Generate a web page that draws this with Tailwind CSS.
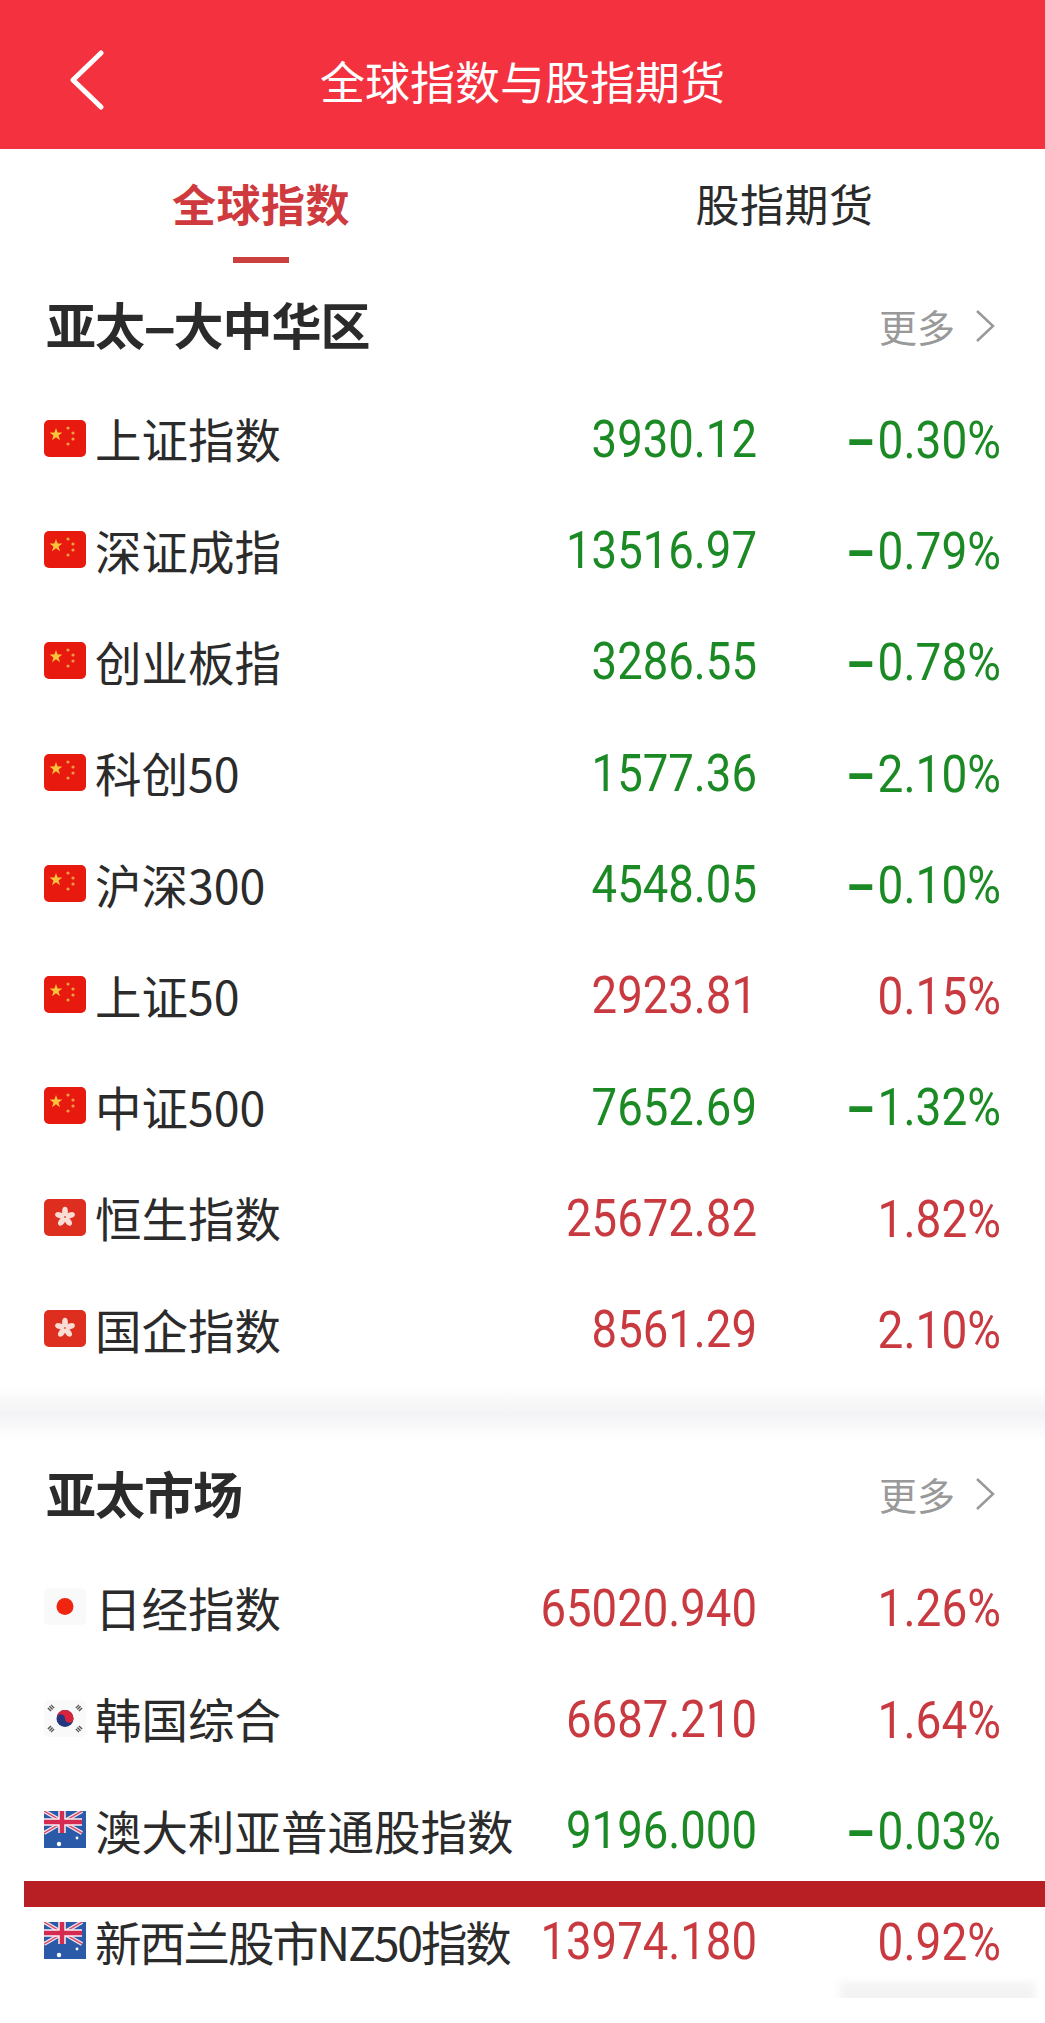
<!DOCTYPE html>
<html lang="zh-CN">
  <head>
    <meta charset="UTF-8" />
    <meta name="viewport" content="width=device-width, initial-scale=1.0" />
    <script src="https://cdn.jsdelivr.net/npm/@tailwindcss/browser@4"></script>
    <title>全球指数与股指期货</title>
  </head>
  <body class="relative bg-white font-['Noto_Sans_CJK_SC',sans-serif] text-[#2b2b2b]">
    <!-- flags, reused by every row -->
    <svg class="hidden">
      <symbol id="cn" viewBox="0 0 42 37">
        <rect width="42" height="37" rx="5" fill="#e8190f" />
        <polygon fill="#f6c53c" points="12,8 13.6,12.6 18.4,12.6 14.5,15.5 16,20.2 12,17.3 8,20.2 9.5,15.5 5.6,12.6 10.4,12.6" />
        <circle cx="24" cy="8" r="1.6" fill="#f0a040" />
        <circle cx="29" cy="13" r="1.6" fill="#f0a040" />
        <circle cx="29" cy="19" r="1.6" fill="#f0a040" />
        <circle cx="24" cy="24" r="1.6" fill="#f0a040" />
      </symbol>
      <symbol id="hk" viewBox="0 0 42 37">
        <rect width="42" height="37" rx="5" fill="#dd2e1f" />
        <g fill="#f9dcd4">
          <ellipse cx="21" cy="12.5" rx="2.9" ry="4.8" />
          <ellipse cx="21" cy="12.5" rx="2.9" ry="4.8" transform="rotate(72 21 18)" />
          <ellipse cx="21" cy="12.5" rx="2.9" ry="4.8" transform="rotate(144 21 18)" />
          <ellipse cx="21" cy="12.5" rx="2.9" ry="4.8" transform="rotate(216 21 18)" />
          <ellipse cx="21" cy="12.5" rx="2.9" ry="4.8" transform="rotate(288 21 18)" />
        </g>
      </symbol>
      <symbol id="jp" viewBox="0 0 42 37">
        <rect width="42" height="37" rx="5" fill="#f9f9f9" />
        <circle cx="21" cy="18.5" r="8.5" fill="#f0250f" />
      </symbol>
      <symbol id="kr" viewBox="0 0 42 37">
        <rect width="42" height="37" rx="5" fill="#f9f9f9" />
        <circle cx="21" cy="18.5" r="8.5" fill="#24367f" />
        <path d="M12.5 18.5a8.5 8.5 0 0 1 17 0a4.25 4.25 0 0 1-8.5 0a4.25 4.25 0 0 0-8.5 0z" fill="#d8243a" />
        <g stroke="#555" stroke-width="4.5" stroke-dasharray="1.4 .8">
          <path d="M5 10l4-4M37 10l-4-4M5 27l4 4M37 27l-4 4" />
        </g>
      </symbol>
      <symbol id="au" viewBox="0 0 42 37">
        <clipPath id="au-clip"><rect width="42" height="37" rx="5" /></clipPath>
        <g clip-path="url(#au-clip)">
          <rect width="42" height="37" fill="#2b5ba8" />
          <path d="M0 0L38 22M38 0L0 22" stroke="#f3e6ec" stroke-width="4" />
          <path d="M0 0L38 22M38 0L0 22" stroke="#d9506e" stroke-width="1.5" />
          <path d="M18 0V22M0 11H38" stroke="#f8f0f3" stroke-width="7.5" />
          <path d="M18 0V22M0 11H38" stroke="#d62b50" stroke-width="4.5" />
          <circle cx="15" cy="33" r="2.2" fill="#fff" />
          <circle cx="33" cy="27" r="1.4" fill="#fff" />
        </g>
      </symbol>
    </svg>

    <header class="relative h-[149px] bg-[#f4313f] flex items-center justify-center">
      <svg class="absolute left-[69px] top-[50px] w-[36px] h-[60px]" viewBox="0 0 36 60" fill="none" stroke="#fff" stroke-width="5" stroke-linecap="round" stroke-linejoin="round">
        <path d="M32 3L4 30L32 57" />
      </svg>
      <h1 class="text-white text-[45px] leading-none pt-[12px]">全球指数与股指期货</h1>
    </header>

    <div class="grid grid-cols-2 w-[1044px] h-[123px] text-[44px] tracking-[0.5px] leading-none">
      <div class="relative flex justify-center pt-[32px] font-bold text-[#cf3a3e]">
        全球指数
        <span class="absolute top-[108px] left-[233px] w-[56px] h-[6px] bg-[#c9403f]"></span>
      </div>
      <div class="flex justify-center pt-[32px] pl-[3px]">股指期货</div>
    </div>

    <section>
      <div class="h-[112px] flex items-center justify-between pb-[10px] pl-[46px] pr-[50px]">
        <h2 class="text-[50px] leading-none font-bold tracking-[-1px]">亚太<span class="inline-block px-[6px] scale-x-[2]">-</span>大中华区</h2>
        <a class="flex items-center gap-[20px] pt-[5px] text-[38px] leading-none text-[#999]">
          更多
          <svg class="w-[20px] h-[34px]" viewBox="0 0 20 34" fill="none" stroke="#999" stroke-width="2.5"><path d="M2 2L18 17L2 32" /></svg>
        </a>
      </div>
      <div id="greater-china"></div>
    </section>

    <div class="h-[55px] bg-linear-to-b from-white via-[#f3f3f5] to-white"></div>

    <section>
      <div class="h-[112px] flex items-center justify-between pb-[10px] pl-[46px] pr-[50px]">
        <h2 class="text-[50px] leading-none font-bold tracking-[-1px]">亚太市场</h2>
        <a class="flex items-center gap-[20px] pt-[5px] text-[38px] leading-none text-[#999]">
          更多
          <svg class="w-[20px] h-[34px]" viewBox="0 0 20 34" fill="none" stroke="#999" stroke-width="2.5"><path d="M2 2L18 17L2 32" /></svg>
        </a>
      </div>
      <div id="asia-pacific"></div>
    </section>

    <!-- red band lying over the list -->
    <div class="absolute left-[24px] right-0 top-[1881px] h-[26px] bg-[#b81f25]"></div>
    <div class="absolute left-[840px] top-[1982px] w-[195px] h-[28px] bg-[#f3f3f3] blur-[4px]"></div>
    <div class="absolute left-0 right-0 top-[2017px] h-[6px] bg-[#f6f6f6]"></div>

    <script>
      const greaterChina = [
        ["cn", "上证指数", "3930.12", "-0.30%"],
        ["cn", "深证成指", "13516.97", "-0.79%"],
        ["cn", "创业板指", "3286.55", "-0.78%"],
        ["cn", "科创50", "1577.36", "-2.10%"],
        ["cn", "沪深300", "4548.05", "-0.10%"],
        ["cn", "上证50", "2923.81", "0.15%"],
        ["cn", "中证500", "7652.69", "-1.32%"],
        ["hk", "恒生指数", "25672.82", "1.82%"],
        ["hk", "国企指数", "8561.29", "2.10%"],
      ];
      const asiaPacific = [
        ["jp", "日经指数", "65020.940", "1.26%"],
        ["kr", "韩国综合", "6687.210", "1.64%"],
        ["au", "澳大利亚普通股指数", "9196.000", "-0.03%"],
        ["au", "新西兰股市NZ50指数", "13974.180", "0.92%", "tracking-[-2.2px]"],
      ];

      function renderRows(id, rows) {
        document.getElementById(id).innerHTML = rows
          .map(([flag, name, value, change, nameClass = ""]) => {
            const down = change.startsWith("-");
            const color = down ? "text-[#1c8a24]" : "text-[#c93a40]";
            const pct = down
              ? `<span class="inline-block px-[7px] scale-x-[1.8] font-bold">-</span>${change.slice(1)}`
              : change;
            return `
              <div class="h-[111.3px] flex items-center pl-[44px] pr-[44px]">
                <svg class="w-[42px] h-[37px] shrink-0 mr-[9px] -mt-[3px]"><use href="#${flag}" /></svg>
                <span class="flex-1 whitespace-nowrap text-[46.5px] leading-none pb-[2px] ${nameClass}">${name}</span>
                <span class="inline-block scale-y-[1.14] font-['Roboto',sans-serif] text-[45.5px] leading-none ${color}">${value}</span>
                <span class="inline-block scale-y-[1.14] w-[244px] text-right font-['Roboto',sans-serif] text-[46px] leading-none ${color}">${pct}</span>
              </div>`;
          })
          .join("");
      }

      renderRows("greater-china", greaterChina);
      renderRows("asia-pacific", asiaPacific);
    </script>
  </body>
</html>
